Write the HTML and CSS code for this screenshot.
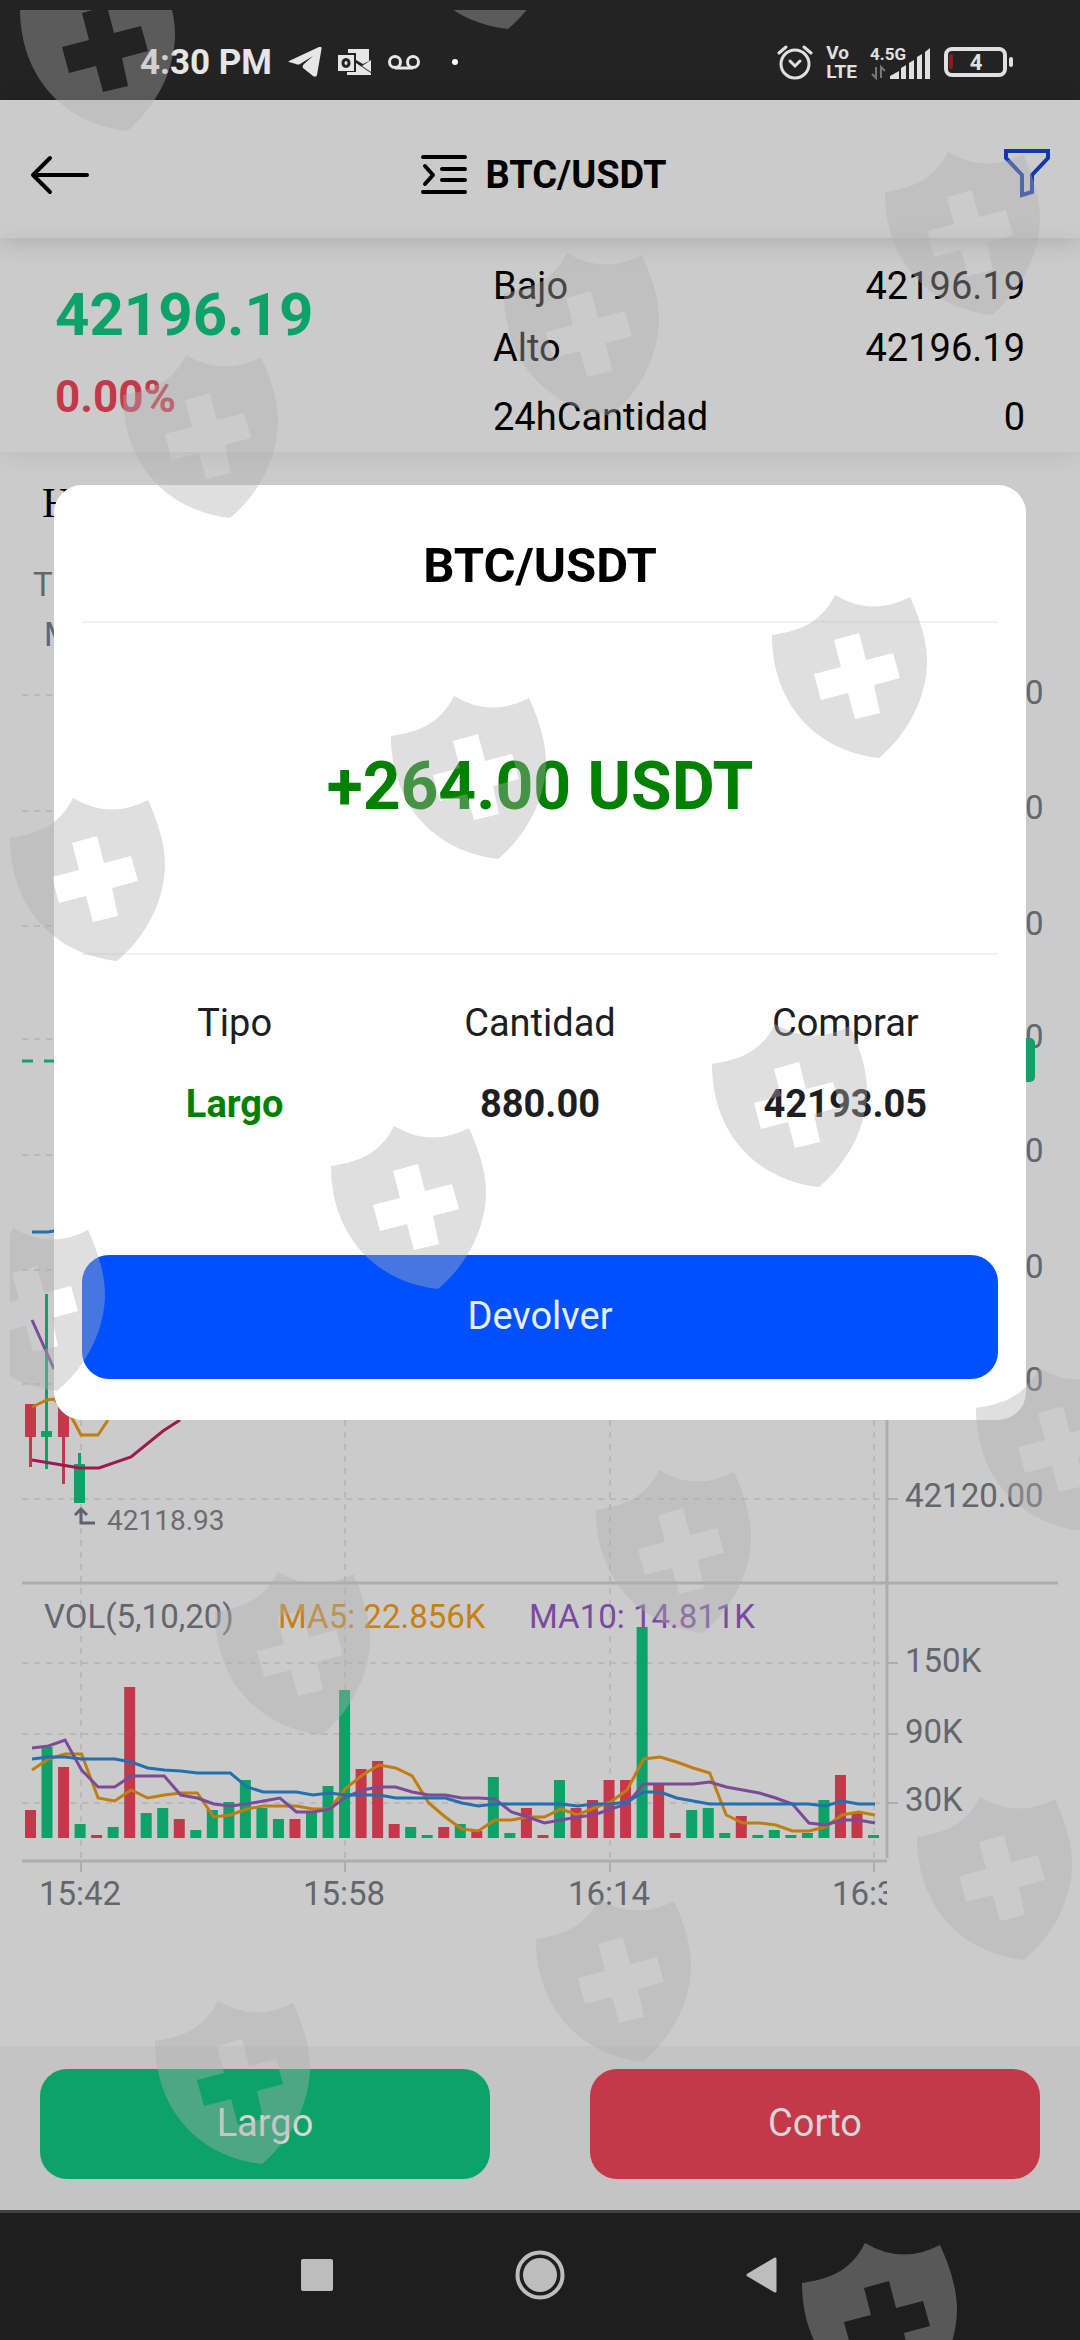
FILE: index.html
```html
<!DOCTYPE html>
<html lang="es">

<head>
    <meta charset="UTF-8">
    <meta name="viewport" content="width=device-width, initial-scale=1.0">
    <title>BTC/USDT</title>
    <link rel="stylesheet" href="styles.css">
</head>

<body>
    <!-- Phone status bar -->
    <div class="status-bar">
        <div class="status-left">
            <span class="clock">4:30 PM</span>
            <svg width="34" height="30" viewBox="0 0 34 30" fill="#e6e6e6">
                <path d="M1 14 31 0q3-1 2.500 2L29 28q-1 3-4 1L15 21q-1-2 1-4l9-8-13 8q-2 1-4 0l-7-2q-1-0.500 0-1z" />
            </svg>
            <svg width="34" height="28" viewBox="0 0 34 28" fill="#e6e6e6">
                <path d="M10 1h21v12l-6 3-7-4V5h-8zM33 12v12l-9-6zM18 15l15 10v2H9v-3h9z" />
                <path fill-rule="evenodd" d="M0 7h16v16H0zM8 10c-6 0-6 10 0 10s6-10 0-10zm0 3c2 0 2 4 0 4s-2-4 0-4z" />
            </svg>
            <svg width="32" height="16" viewBox="0 0 32 16" fill="none" stroke="#e6e6e6" stroke-width="3">
                <circle cx="7" cy="8" r="5.500" />
                <circle cx="25" cy="8" r="5.500" />
                <path d="M7 14h18" />
            </svg>
            <span class="dot"></span>
        </div>
        <div class="status-right">
            <svg width="36" height="36" viewBox="0 0 36 36" fill="none" stroke="#e0e0e0" stroke-width="3" stroke-linecap="round">
                <circle cx="18" cy="20" r="14" />
                <path d="M2 9l7-6M34 9l-7-6M13 17l5 5 5-5" />
            </svg>
            <span class="volte"><span>Vo</span><span>LTE</span></span>
            <svg width="61" height="38" viewBox="0 -4 61 38" fill="#e0e0e0">
                <text x="0" y="13" class="net-text">4.5G</text>
                <path d="M20 32v-3l9-5v8zM31 32V21l5-3v14zM39 32V16l5-3v19zM47 32V10l5-3v25zM55 32V5l5-4v31z" />
                <path d="M6 20v11l-4-4M11 31V20l4 4" fill="none" stroke="#777" stroke-width="2" />
            </svg>
            <svg width="70" height="32" viewBox="0 0 70 32">
                <rect x="2" y="3" width="59" height="26" rx="6" fill="none" stroke="#e0e0e0" stroke-width="4" />
                <rect x="65" y="11" width="4" height="10" rx="2" fill="#e0e0e0" />
                <rect x="5" y="8" width="4" height="15" rx="2" fill="#8c1d1d" />
                <text x="32" y="24" text-anchor="middle" class="battery-text">4</text>
            </svg>
        </div>
    </div>

    <!-- Page header -->
    <header class="header">
        <button class="icon-button" aria-label="Volver">
            <svg width="60" height="40" viewBox="0 0 60 40" fill="none" stroke="#000" stroke-width="4" stroke-linecap="round" stroke-linejoin="round">
                <path d="M57 20H3M20 3 3 20l17 17" />
            </svg>
        </button>
        <h1 class="pair">
            <svg width="46" height="40" viewBox="0 0 46 40" fill="none" stroke="#000" stroke-width="4" stroke-linecap="round" stroke-linejoin="round">
                <path d="M2 2h42M21 14h23M21 25h23M2 37h42M4 11l8 9-8 9" />
            </svg>
            BTC/USDT
        </h1>
        <button class="icon-button filter" aria-label="Filtrar">
            <svg width="46" height="50" viewBox="0 0 46 50" fill="none" stroke="#1238b0" stroke-width="4">
                <path d="M2 3h42v7L28 27v17l-10 3V27L2 10z" />
            </svg>
        </button>
    </header>

    <!-- Ticker -->
    <section class="ticker">
        <div class="ticker-price">
            <p class="price">42196.19</p>
            <p class="change">0.00%</p>
        </div>
        <dl class="ticker-stats">
            <div><dt>Bajo</dt><dd>42196.19</dd></div>
            <div><dt>Alto</dt><dd>42196.19</dd></div>
            <div><dt>24hCantidad</dt><dd>0</dd></div>
        </dl>
    </section>

    <!-- Candles and volume -->
    <main class="chart-area">
        <p class="range">H</p>
        <svg class="chart" viewBox="0 540 1080 1400">
            <defs>
                <clipPath id="plot">
                    <rect x="0" y="540" width="887" height="1400" />
                </clipPath>
            </defs>

            <g class="grid">
                <path d="M22 695H887M22 811H887M22 926H887M22 1039H887M22 1155H887M22 1270H887M22 1384H887M22 1499H887M22 1663H887M22 1734H887M22 1803H887" />
                <path d="M81 640V1858M345 640V1858M610 640V1858M874 640V1858" />
            </g>
            <path class="axis" d="M22 1583H1058M22 1861H887M887 640V1858" />
            <path class="tick" d="M888 1499h10M888 1663h10M888 1734h10M888 1803h10M81 1862v10M345 1862v10M610 1862v10M874 1862v10" />

            <g class="label">
                <text x="33" y="596">T</text>
                <text x="44" y="646">M</text>
                <text x="905" y="704">42260.00</text>
                <text x="905" y="819">42240.00</text>
                <text x="905" y="935">42220.00</text>
                <text x="905" y="1048">42200.00</text>
                <text x="905" y="1162">42180.00</text>
                <text x="905" y="1278">42160.00</text>
                <text x="905" y="1391">42140.00</text>
                <text x="905" y="1507">42120.00</text>
                <text x="905" y="1672">150K</text>
                <text x="905" y="1743">90K</text>
                <text x="905" y="1811">30K</text>
            </g>

            <!-- Last price -->
            <path d="M22 1061H887" stroke="#1c9c74" stroke-width="3" stroke-dasharray="11 11" />
            <rect x="888" y="1038" width="147" height="44" rx="5" fill="#0da268" />

            <!-- Candles -->
            <path class="down" d="M25 1404h11v33h-4v30h-3v-30h-4zM58 1404h11v33h-4v47h-3v-47h-4z" />
            <path class="up" d="M45 1294h3v137h4v6h-4v32h-3v-32h-4v-6h4zM78 1453h3v11h4v39H74v-39h4z" />
            <g class="line">
                <path class="ma20" d="M32 1232H48L54 1231" />
                <path class="ma10" d="M32 1320 54 1369" />
                <path class="ma5" d="M32 1407 47 1400 54 1399 72 1418 81 1435H98L108 1420" />
                <path class="ma60" d="M32 1460 80 1468H99L131 1457 163 1431 180 1420" />
            </g>

            <path class="low-mark" d="M95 1523H81V1510M75 1515 81 1509 87 1515" />
            <text x="107" y="1530" class="low-text">42118.93</text>

            <g class="label">
                <text x="44" y="1628">VOL(5,10,20)</text>
                <text x="278" y="1628" class="ma5-text">MA5: 22.856K</text>
                <text x="529" y="1628" class="ma10-text">MA10: 14.811K</text>
            </g>

            <!-- Filled by script.js -->
            <g id="volume"></g>
            <g id="volumeLines" class="line"></g>

            <g class="label" text-anchor="middle" clip-path="url(#plot)">
                <text x="80" y="1905">15:42</text>
                <text x="344" y="1905">15:58</text>
                <text x="609" y="1905">16:14</text>
                <text x="873" y="1905">16:30</text>
            </g>
        </svg>
    </main>

    <div class="actions">
        <button class="action long">Largo</button>
        <button class="action short">Corto</button>
    </div>

    <!-- Phone navigation bar -->
    <nav class="nav-bar">
        <svg width="34" height="34" viewBox="0 0 34 34"><rect x="1" y="1" width="32" height="32" rx="2" fill="#bdbdbd" /></svg>
        <svg width="50" height="50" viewBox="0 0 50 50"><circle cx="25" cy="25" r="22.500" fill="none" stroke="#bdbdbd" stroke-width="4" /><circle cx="25" cy="25" r="17" fill="#bdbdbd" /></svg>
        <svg width="34" height="38" viewBox="0 0 34 38"><path d="M29 3v32L2 19z" fill="#bdbdbd" stroke="#bdbdbd" stroke-width="3" stroke-linejoin="round" /></svg>
    </nav>

    <!-- Result dialog -->
    <div class="modal" role="dialog" aria-labelledby="modalTitle">
        <h2 id="modalTitle">BTC/USDT</h2>
        <p class="profit">+264.00 USDT</p>
        <table class="order">
            <thead>
                <tr><th>Tipo</th><th>Cantidad</th><th>Comprar</th></tr>
            </thead>
            <tbody>
                <tr><td class="side">Largo</td><td>880.00</td><td>42193.05</td></tr>
            </tbody>
        </table>
        <button class="return">Devolver</button>
    </div>

    <!-- Shield watermark -->
    <svg class="watermark" viewBox="0 0 1080 2340" aria-hidden="true">
        <defs>
            <clipPath id="inset">
                <rect x="10" y="10" width="1070" height="2330" />
            </clipPath>
            <path id="shield" fill-rule="evenodd" d="M0 40C25 36 48 30 63 0Q100 22 138 2C150 28 155 50 155 66C155 100 138 137 107 163C45 156 0 110 0 40ZM62 45 87 38 94 65 121 58 128 83 102 90 108 118 83 124 76 98 49 105 42 79 69 72Z" />
        </defs>
        <g clip-path="url(#inset)">
            <use href="#shield" x="20" y="-32" />
            <use href="#shield" x="401" y="-134" />
            <use href="#shield" x="885" y="152" />
            <use href="#shield" x="504" y="253" />
            <use href="#shield" x="123" y="355" />
            <use href="#shield" x="772" y="595" />
            <use href="#shield" x="391" y="696" />
            <use href="#shield" x="10" y="798" />
            <use href="#shield" x="712" y="1024" />
            <use href="#shield" x="331" y="1126" />
            <use href="#shield" x="-50" y="1228" />
            <use href="#shield" x="976" y="1368" />
            <use href="#shield" x="596" y="1470" />
            <use href="#shield" x="215" y="1572" />
            <use href="#shield" x="917" y="1797" />
            <use href="#shield" x="536" y="1899" />
            <use href="#shield" x="155" y="2001" />
            <use href="#shield" x="802" y="2243" />
        </g>
    </svg>

    <script src="script.js"></script>
</body>

</html>
```
FILE: styles.css
```css
* {
    box-sizing: border-box;
}

body {
    font-family: Roboto, sans-serif;
    background-color: #cbcbcb;
    color: #000;
    margin: 0;
    min-height: 100vh;
    display: flex;
    flex-direction: column;
    position: relative;
    overflow-x: hidden;
}

h1,
h2,
p,
dl,
dd {
    margin: 0;
}

button {
    font-family: inherit;
    border: none;
    padding: 0;
    cursor: pointer;
}

svg {
    display: block;
    flex-shrink: 0;
}

/* Status bar */
.status-bar {
    height: 100px;
    padding: 24px 66px 0 140px;
    background-color: #232323;
    color: #e6e6e6;
    display: flex;
    justify-content: space-between;
    align-items: center;
}

.status-left,
.status-right {
    display: flex;
    align-items: center;
    gap: 16px;
}

.status-right {
    gap: 13px;
}

.clock {
    font-size: 35px;
    font-weight: 700;
}

.dot {
    width: 6px;
    height: 6px;
    margin-left: 16px;
    border-radius: 50%;
    background-color: #fff;
}

.volte {
    display: flex;
    flex-direction: column;
    font-size: 19px;
    font-weight: 700;
    line-height: 19px;
    color: #e0e0e0;
}

.net-text {
    font-size: 17px;
    font-weight: 700;
}

.battery-text {
    font-size: 22px;
    font-weight: 700;
    fill: #e0e0e0;
}

/* Header */
.header {
    height: 138px;
    padding: 12px 30px 0;
    display: grid;
    grid-template-columns: 68px 1fr 60px;
    align-items: center;
    position: relative;
    box-shadow: 0 4px 24px rgba(0, 0, 0, 0.15);
}

.icon-button {
    justify-self: start;
    background: none;
}

.filter {
    justify-self: end;
    padding-bottom: 4px;
}

.pair {
    display: flex;
    align-items: center;
    justify-content: center;
    gap: 18px;
    font-size: 38px;
    font-weight: 700;
}

/* Ticker */
.ticker {
    height: 214px;
    padding: 17px 55px 0;
    display: grid;
    grid-template-columns: 438px 1fr;
    box-shadow: 0 4px 24px rgba(0, 0, 0, 0.07);
}

.price {
    margin-top: 20px;
    color: #0da268;
    font-size: 60px;
    font-weight: 700;
    line-height: 80px;
}

.change {
    color: #c43849;
    font-size: 44px;
    font-weight: 700;
    line-height: 84px;
}

.ticker-stats div {
    display: flex;
    justify-content: space-between;
    font-size: 38px;
    line-height: 62px;
}

.ticker-stats div:last-child {
    padding-top: 7px;
}

/* Chart */
.chart-area {
    flex: 1;
}

.range {
    height: 88px;
    padding: 27px 42px 0;
    font-family: "Liberation Serif", serif;
    font-size: 42px;
    line-height: 48px;
}

.chart {
    width: 100%;
}

.grid path {
    fill: none;
    stroke: #b9b9b9;
    stroke-width: 2;
    stroke-dasharray: 6 6;
}

.axis {
    fill: none;
    stroke: #adadad;
    stroke-width: 3;
}

.tick {
    stroke: #adadad;
    stroke-width: 2;
}

.label {
    font-size: 33px;
    fill: #62666d;
}

.low-text {
    font-size: 28px;
    fill: #6a6c72;
}

.low-mark {
    fill: none;
    stroke: #5f6070;
    stroke-width: 3;
}

.ma5-text {
    fill: #c8800f;
}

.ma10-text {
    fill: #7a4aa0;
}

.up {
    fill: #0da268;
}

.down {
    fill: #c43849;
}

.line path {
    fill: none;
    stroke-width: 3;
}

.line .ma5 {
    stroke: #c07d10;
}

.line .ma10 {
    stroke: #7b4b98;
}

.line .ma20 {
    stroke: #256fae;
}

.line .ma60 {
    stroke: #9c1a50;
}

/* Long and short buttons */
.actions {
    height: 164px;
    padding: 23px 40px 31px;
    display: grid;
    grid-template-columns: 1fr 1fr;
    gap: 100px;
    background-color: #c4c4c4;
}

.action {
    padding-bottom: 2px;
    border-radius: 27px;
    color: #d6d6d6;
    font-size: 38px;
}

.long {
    background-color: #0da268;
}

.short {
    background-color: #c43849;
}

.nav-bar {
    height: 130px;
    padding-bottom: 4px;
    display: flex;
    justify-content: center;
    align-items: center;
    gap: 181px;
    background-color: #1e1e1e;
    border-top: 3px solid #424242;
}

/* Result dialog */
.modal {
    position: absolute;
    top: 485px;
    left: 5%;
    right: 5%;
    padding: 26px 28px 41px;
    background-color: #fff;
    border-radius: 28px;
    color: #1c1e22;
    text-align: center;
}

.modal h2 {
    height: 112px;
    color: #000;
    font-size: 49px;
    font-weight: 700;
    line-height: 110px;
    border-bottom: 2px solid #f2f2f2;
}

.profit {
    height: 332px;
    color: #008000;
    font-size: 66px;
    font-weight: 700;
    line-height: 328px;
    border-bottom: 2px solid #f2f2f2;
}

.order {
    width: 100%;
    margin: 27px 0 111px;
    border-collapse: collapse;
    table-layout: fixed;
    font-size: 38px;
}

.order th,
.order td {
    height: 81px;
    padding: 0;
}

.order th {
    font-weight: 400;
}

.order td {
    font-weight: 700;
}

.order .side {
    color: #008000;
}

.return {
    width: 100%;
    height: 124px;
    padding-bottom: 2px;
    background-color: #0050ff;
    color: #e8eeff;
    border-radius: 27px;
    font-size: 38px;
}

.watermark {
    position: absolute;
    top: 0;
    left: 0;
    width: 100%;
    fill: rgba(175, 175, 175, 0.4);
    pointer-events: none;
}
```
FILE: script.js
```javascript
const svgNs = "http://www.w3.org/2000/svg";
const baseY = 1838;
const step = 16.53;

// Positive = green bar, negative = red bar
const volumes = [
    -28, 91, -71, 14, -3, 11, -151, 25, 30, -19, 8, 28, 36, 58, 30, 19, -19, 25, 52, 148,
    -69, -77, -14, 11, 3, -11, 14, -7, 61, 5, -30, -3, 58, -30, -38, -58, -58, 211, -53, -5,
    28, 30, 5, -22, 3, 8, 3, 5, 38, -63, -25, 3
];

const averages = {
    ma5: [
        68, 79, 84, 84, 40, 37, 48, 40, 43, 45, 45, 21, 23, 29, 32, 32, 32, 29, 29, 50,
        63, 73, 70, 62, 35, 21, 9, 7, 18, 18, 21, 21, 29, 23, 30, 36, 48, 79, 81, 76,
        70, 65, 23, 15, 15, 13, 7, 7, 11, 23, 26, 23
    ],
    ma10: [
        90, 92, 98, 68, 51, 51, 62, 62, 62, 43, 40, 34, 32, 34, 37, 40, 26, 26, 29, 41,
        48, 51, 51, 46, 43, 43, 40, 40, 39, 26, 21, 15, 18, 21, 23, 29, 34, 54, 54, 54,
        54, 56, 51, 48, 45, 40, 34, 15, 13, 18, 18, 15
    ],
    ma20: [
        79, 81, 81, 79, 79, 79, 76, 70, 68, 67, 65, 65, 65, 51, 46, 46, 46, 43, 45, 43,
        43, 43, 40, 40, 40, 40, 35, 32, 34, 34, 34, 34, 34, 32, 34, 34, 36, 46, 46, 40,
        37, 34, 34, 34, 34, 34, 34, 34, 32, 37, 34, 34
    ]
};

const volumeGroup = document.getElementById("volume");
volumes.forEach((value, i) => {
    const bar = document.createElementNS(svgNs, "rect");
    bar.setAttribute("class", value > 0 ? "up" : "down");
    bar.setAttribute("x", 25 + i * step);
    bar.setAttribute("y", baseY - Math.abs(value));
    bar.setAttribute("width", 11);
    bar.setAttribute("height", Math.abs(value));
    volumeGroup.appendChild(bar);
});

const lineGroup = document.getElementById("volumeLines");
Object.keys(averages).forEach((name) => {
    const points = averages[name].map((value, i) => `${32 + i * step} ${baseY - value}`);
    const line = document.createElementNS(svgNs, "path");
    line.setAttribute("class", name);
    line.setAttribute("d", `M${points.join("L")}`);
    lineGroup.appendChild(line);
});
```
